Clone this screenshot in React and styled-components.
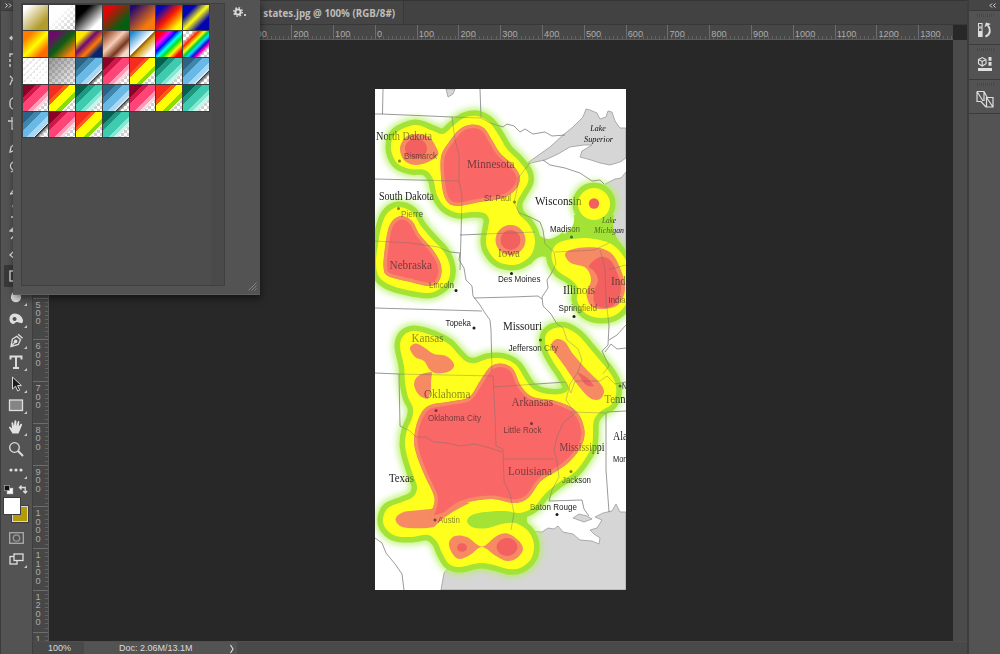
import React from "react";
import styled, { createGlobalStyle, css } from "styled-components";

const GlobalStyle = createGlobalStyle`
  * { box-sizing: border-box; }
  body { margin: 0; background: #282828; overflow: hidden; font-family: "Liberation Sans", Arial, sans-serif; }
`;

const Workspace = styled.div`
  position: relative;
  display: flex;
  width: 1000px;
  height: 654px;
  background: #282828;
  overflow: hidden;
`;

/* ---------- left tool bar ---------- */

const Toolbar = styled.aside`
  display: flex;
  flex-direction: column;
  width: 33px;
  background: #535353;
  border-left: 1px solid #3c3c3c;
  border-right: 1px solid #3e3e3e;
`;

const CollapseStrip = styled.div`
  display: flex;
  align-items: center;
  justify-content: ${(p) => p.$align || "flex-start"};
  height: 11px;
  padding: 0 4px;
  background: #454545;
  border-bottom: 1px solid #3a3a3a;
`;

const ToolList = styled.div`
  display: flex;
  flex-direction: column;
  padding-top: 16.5px;
`;

const ToolSlot = styled.div`
  position: relative;
  display: flex;
  align-items: center;
  justify-content: center;
  height: 21.6px;
  margin: 0 2px 0 3px;
  padding-right: 2px;
  background: ${(p) => (p.$active ? "#383838" : "transparent")};
  ${(p) =>
    p.$more &&
    css`
      &::after {
        content: "";
        position: absolute;
        right: 3px;
        bottom: 2px;
        border-left: 3px solid transparent;
        border-bottom: 3px solid #c8c8c8;
      }
    `}
`;

const Icon = styled.svg`
  display: block;
  flex: none;
  width: ${(p) => p.$w || 16}px;
  height: ${(p) => p.$h || 16}px;
  fill: none;
  stroke: #dedede;
  stroke-width: 1.3;
  overflow: visible;
`;

const ColorControls = styled.div`
  display: flex;
  justify-content: space-between;
  height: 17px;
  padding: 4px 4px 0 3px;
`;

const ColorPair = styled.div`
  position: relative;
  height: 25px;
  margin: 0 0 4px 3px;
`;

const ColorChip = styled.div`
  position: absolute;
  left: ${(p) => (p.$back ? 8 : 0)}px;
  top: ${(p) => (p.$back ? 8 : 0)}px;
  width: 16px;
  height: 16px;
  background: ${(p) => p.$color};
  border: 1px solid ${(p) => (p.$back ? "#d8d8d8" : "#fff")};
  outline: 1px solid #3d3d3d;
`;

/* ---------- document ---------- */

const DocumentArea = styled.main`
  display: flex;
  flex-direction: column;
  width: 934px;
`;

const TabStrip = styled.div`
  display: flex;
  height: 25px;
  background: #424242;
  border-top: 1px solid #353535;
  border-bottom: 1px solid #383838;
`;

const DocumentTab = styled.div`
  display: flex;
  align-items: center;
  justify-content: flex-end;
  width: 371px;
  padding: 2px 8px 0 0;
  border-right: 1px solid #383838;
  background: #454545;
  color: #bdbdbd;
  font: 700 9.75px "Open Sans", sans-serif;
  white-space: nowrap;
`;

const TopRuler = styled.div`
  display: flex;
  width: 920px;
  height: 15px;
  padding-left: 216.5px;
  background: #474747;
  border-bottom: 1px solid #5d5d5d;
  overflow: hidden;
`;

const TopMark = styled.div`
  flex: none;
  width: 41.8px;
  padding: 3px 0 0 1px;
  border-left: 1px solid #6c6c6c;
  background: repeating-linear-gradient(90deg, transparent 0 3.18px, #626262 3.18px 4.18px) 0 100% / 100% 3px no-repeat;
  color: #ababab;
  font-size: 9.2px;
  line-height: 12px;
`;

const DocumentBody = styled.div`
  display: flex;
  height: 601px;
  background: #4b4b4b;
`;

const SideRuler = styled.div`
  display: flex;
  flex-direction: column;
  width: 16px;
  padding-top: 257.5px;
  background: #474747;
  border-right: 1px solid #5b5b5b;
  overflow: hidden;
`;

const SideMark = styled.div`
  flex: none;
  height: 41.8px;
  padding: 2px 0 0 2px;
  border-top: 1px solid #6c6c6c;
  background: repeating-linear-gradient(180deg, transparent 0 3.18px, #626262 3.18px 4.18px) 100% 0 / 3px 100% no-repeat;
  color: #ababab;
  font-size: 9.2px;
  line-height: 8.4px;
`;

const Digit = styled.div`
  width: 6px;
  text-align: center;
`;

const Canvas = styled.div`
  display: flex;
  justify-content: center;
  width: 904px;
  padding: 49px 1px 0 0;
  background: #282828;
`;

const Artwork = styled.svg`
  display: block;
  flex: none;
  width: 251px;
  height: 501px;
  background: #fff;
`;

const StatusBar = styled.footer`
  display: flex;
  height: 13px;
  background: #494949;
  border-top: 1px solid #4f4f4f;
  color: #dadada;
  font-size: 9px;
  line-height: 13px;
`;

const ZoomValue = styled.div`
  width: 51px;
  padding-left: 15px;
`;

const DocInfo = styled.div`
  display: flex;
  justify-content: space-between;
  width: 153px;
  padding: 0 3px 0 35px;
  background: #535353;
`;

/* ---------- right dock ---------- */

const Dock = styled.aside`
  display: flex;
  flex-direction: column;
  width: 33px;
  background: #535353;
  border-left: 2px solid #3d3d3d;
`;

const DockPanel = styled.div`
  display: flex;
  flex-direction: column;
  align-items: center;
  height: 34.3px;
  padding: 3px 0 0 1px;
  border-bottom: 1px solid #3b3b3b;
`;

const Grip = styled.div`
  width: 17px;
  height: 3px;
  margin-bottom: 5px;
  background: repeating-linear-gradient(90deg, #454545 0 1px, #585858 1px 2px);
`;

/* ---------- gradient picker ---------- */

const Picker = styled.section`
  position: absolute;
  left: 13px;
  top: 0;
  display: flex;
  width: 247px;
  height: 295px;
  padding: 3px 0 8px 8px;
  background: #535353;
  border-bottom: 1px solid #606060;
  box-shadow: 1px 3px 7px rgba(0, 0, 0, 0.5);
`;

const SwatchPane = styled.div`
  display: flex;
  width: 204px;
  height: 283px;
  border: 1px solid #404040;
  background: #4d4d4d;
`;

const SwatchGrid = styled.div`
  display: grid;
  grid-template-columns: repeat(7, 25.8px);
  grid-auto-rows: 25.8px;
  align-content: start;
  gap: 1px;
  width: 190px;
  padding: 0.5px;
`;

const Track = styled.div`
  width: 13px;
  background: #4a4a4a;
`;

const Swatch = styled.div`
  outline: 1px solid #3d3d3d;
  background: ${(p) => p.$paint},
    conic-gradient(#cfcfcf 25%, #fff 0 50%, #cfcfcf 0 75%, #fff 0) 0 0 / 6px 6px;
`;

const PickerSide = styled.div`
  display: flex;
  flex: 1;
  flex-direction: column;
  align-items: flex-end;
  justify-content: space-between;
  margin-bottom: -5px;
  padding: 4px 3px 0 0;
`;

const MenuButton = styled.div`
  display: flex;
  align-items: center;
  gap: 1px;
  padding-right: 11px;
`;

const MenuDot = styled.div`
  width: 2px;
  height: 2px;
  margin-top: 5px;
  background: #c8c8c8;
`;

const lg = (stops) => `linear-gradient(135deg, ${stops})`;
const BLUE = lg("#2b6286 0 24%, #3f86ad 24% 38%, #69b9e6 38% 58%, #a9d8f5 58% 71%, #d8ecf8 71% 73%, #2c2c2c 74%, rgba(90,90,90,0) 84%");
const PINK = lg("#8b0228 0 24%, #cf1748 24% 37%, #ff4578 37% 60%, #ff9db8 60% 70%, #ffd5e0 70% 78%, transparent 78%");
const CITRUS = lg("#f32e20 0 30%, #ff5a10 30% 39%, #ffff00 39% 63%, #8bdc00 63% 74%, #f0ffe0 74% 77%, transparent 77%");
const TEAL = lg("#07604f 0 24%, #1d9780 24% 37%, #3ecbb0 37% 59%, #86e8d3 59% 69%, #c8f5ea 69% 77%, transparent 77%");

const swatches = [
  lg("#fff 12%, #b39c2e 75%"),
  lg("#fff 35%, rgba(255,255,255,0) 90%"),
  lg("#000 28%, #fff 78%"),
  lg("#dc0808 22%, #055f10 75%"),
  lg("#26086e 12%, #f87a0c 75%"),
  lg("#0808b8 18%, #ff1800 50%, #ffff00 84%"),
  lg("#0404b0 25%, #ffff10 50%, #0404b0 75%"),
  lg("#ff7c00 20%, #ffff00 52%, #ff6a00 80%"),
  lg("#70086e 18%, #086010 50%, #ff8008 86%"),
  lg("#ffe800 22%, #6c0a70 42%, #ff7a08 62%, #082470 80%"),
  lg("#93441f 8%, #f8cdb8 42%, #78351a 66%, #f5d8c8 84%"),
  lg("#1f86d0 8%, #fff 47%, #8a5c08 50%, #d8a020 58%, #fff 82%"),
  lg("#ff0000 14%, #ff00ff 28%, #0000ff 40%, #00ffff 52%, #00e020 62%, #ffff00 74%, #ff0000 87%"),
  lg("transparent 20%, #ff2000 30%, #ffff00 42%, #00d040 50%, #00e0ff 58%, #1010d0 67%, #ff00c0 75%, transparent 82%"),
  "repeating-linear-gradient(135deg, rgba(255,255,255,.96) 0 3px, rgba(255,255,255,.5) 3px 4.6px)",
  lg("rgba(115,115,115,.75), rgba(170,170,170,.1)"),
  BLUE, PINK, CITRUS, TEAL, BLUE,
  PINK, CITRUS, TEAL, BLUE, PINK, CITRUS, TEAL,
  BLUE, PINK, CITRUS, TEAL,
];

/* ---------- map drawing ---------- */

// Closed Catmull-Rom curve through "x,y x,y ..." points.
const smooth = (text) => {
  const p = text.trim().split(/\s+/).map((s) => s.split(",").map(Number));
  const n = p.length;
  let d = `M${p[0]}`;
  for (let i = 0; i < n; i++) {
    const a = p[(i + n - 1) % n], b = p[i], c = p[(i + 1) % n], e = p[(i + 2) % n];
    const c1 = [b[0] + (c[0] - a[0]) / 6, b[1] + (c[1] - a[1]) / 6];
    const c2 = [c[0] - (e[0] - b[0]) / 6, c[1] - (e[1] - b[1]) / 6];
    d += `C${c1.map((v) => v.toFixed(1))} ${c2.map((v) => v.toFixed(1))} ${c}`;
  }
  return d + "Z";
};

const ring = (x, y, rx, ry = rx) =>
  `M${x - rx},${y}a${rx},${ry} 0 1 0 ${2 * rx},0a${rx},${ry} 0 1 0 ${-2 * rx},0Z`;

const yellowZones = [
  smooth("391,148 396,133 415,125 431,130 443,134 453,126 464,118 477,116 489,122 498,134 507,149 518,160 527,172 528,182 522,193 517,203 519,214 527,222 533,232 535,243 531,255 521,263 510,265 497,261 488,250 486,240 488,228 489,219 484,213 472,212 458,213 445,207 437,195 433,179 425,170 410,169 397,163"),
  smooth("380,232 386,215 398,207 412,212 421,226 432,239 444,252 450,267 448,281 438,290 427,293 407,290 388,284 378,275 376,260 378,245"),
  ring(594, 204, 16),
  smooth("552,252 560,242 583,238 600,240 613,245 624,257 631,275 629,298 617,314 600,318 585,313 577,300 578,288 570,279 559,272 553,263"),
  smooth("400,346 404,335 414,331 428,334 440,339 450,345 459,355 467,362 476,363 487,359 498,358 508,360 517,366 524,377 531,387 541,392.500 555,394.500 565,392.500 568,387 562,375 554,363 548,352 545,342 547,333 555,328 566,328 578,335 588,346 598,358 608,370 615,382 616,394 611,405 601,411 594,420 593,435 592,446 587,456 575,472 558,483 545,494 534,507 520,513 505,511 485,512 472,515 467,521 472,527 485,528.5 498,525 508,523 518,524 529,532 534,545 531,559 520,568 508,569 494,565 480,563 460,567 449,564 442,553 437,542 428,535 412,537 396,536 386,529 383,519 388,508 402,502 413,497 417,487 412,472 407,456 405,443 407,430 412,418 413,408 408,397 405,382 404,366"),
];

const greenLinks = [
  "M528,220Q538,239 549,239Q556,238 563,232L566,246L553,264Q549,256 542,256.500Q536,257 530,265Z",
  "M574,215Q576,230 560,236L575,244L616,248L622,245Q610,232 614,215Z",
  "M467,521Q467,515 485,512L505,511L534,505Q526,512 527,521L529,532L508,523L485,528.500Q468,528 467,521Z",
];

const salmonZones = [
  smooth("400,148 406,137 417,134 429,137 436,147 438,155 428,162 415,165 404,160"),
  ring(510.5, 240, 15),
  smooth("565,255 570,250 583,247.5 600,248 613,255 622,273 625,290 618,305 603,309 591,306 586.5,293 591,280 586,268 571,263"),
  smooth("410,348 416,343.5 425,348 434,354 446,356 454,364 450,371 438,373.5 430,370 424,361 415,357"),
  "M432,372Q414,373 414,385Q417,398 428,399Q432,391 431,382Z",
  smooth("551,345 557,339 565,342 573,354 587,370 599,382 604,391 600,399 590,398 577,384 563,364 555,353"),
  "M440,496Q440,506 431,509Q418,510 405,511.500Q395,515 395.500,520Q397,527 408,528Q425,529 434,527Q447,513 470,503Z",
  smooth("449,543 455,536 467,537 482,546.5 496,536.500 507,533.500 518,540 523,549 517,558 507,561 496,556 482,547 470,555 459,559 452,553"),
];

// Hot areas are red with a salmon rim.
const hotZones = [
  smooth("441,157 449,142 460,129 472,124.500 484,128 492,140 500,153 513,165 520,177 516,189 503,198 480,202 457,206 446,200 441.500,182"),
  smooth("388,230 393,220 402,216 412,221 420,235 433,250 441,265 440,279 431,286 410,282 388,276 383.500,267 385,247"),
  smooth("414,440 418,420 428,406 450,401.500 469,397 480,381 490,367 501,363.500 513,369 521,386 533,397 556,401 576,411 584.500,430 581,447 569,462 557,471 541,481 528,498 514,503 491,499 462,504 444,516 430,518 433,508 434,496 424,474 417,456"),
];

const redZones = [
  ring(416, 148.5, 11, 10),
  ring(510.5, 240, 10),
  ring(594, 203.5, 5.2),
  smooth("589,266 600,257 611,261 619,278 621,290 616,303 606,308 595,304 594,292 598,280 594,271"),
  "M577,372Q588,376 594,386Q586,388 582,380Z",
  ring(462, 547.5, 5, 4.3),
  ring(507, 547, 10.5, 9),
];

const lakes = [
  "M526,164L533,159L550,147L563,135L573,127L583,117L586,109L590,110L597,113L600,119L606,117L608,111L612,112L615,121L620,128L626,128L626,158L620,162L610,165L600,163L591,160L580,157L582,151L592,145L584,145L570,147L558,154L545,160Z",
  "M446,89L455,89L453,94L448,97Z",
  "M598,204L605,184L615,179L621,178L626,172L626,256L617,262L608,255L603,240L601,222Z",
  "M441,590L444,573L450,566L460,556L475,549L487,541L495,530L510,531L527,531L542,532L548,528L554,529L558,526L563,532L573,534L580,540L592,541L599,544L600,538L594,534L590,530L597,528L602,520L595,517L603,513L612,511L616,504L620,512L626,512L626,590Z",
  "M573,518L579,514L587,516L592,519L584,522Z",
];

const borders = [
  "M383,89L382.500,114L375,114",
  "M382,114L452,117L481,118L480,89",
  "M452,117L455,140L459,155L459,181L462,196L461,235L460,270",
  "M375,179L459,181",
  "M481,118L490,123L503,127L507,124L514,126L520,132L525,129L533,134L545,132L552,136L565,135",
  "M530,163L518,178L517,190L514,202L519,213L530,217L540,222",
  "M543,160L550,165L565,168L580,173L592,181L600,180L604,184",
  "M375,241L410,243L438,247L450,252L460,253L459,260L464,268L466,280L472,286L473,296L480,305L485,313L490,320L491,330L492,371",
  "M460,235L535,232",
  "M540,222L543,230L545,244L554,252L556,264L551,274L547,280L548,288L542,297L543,306L551,314L557,324L563,328L567,340L578,349L582,360L578,372L570,384L566,400",
  "M474,298L512,297L538,296L542,299",
  "M555,252L594,250L609,243",
  "M600,250L605,268L606,300L609,325L608,345",
  "M375,308L482,311",
  "M375,373L399,374L493,376",
  "M399,374L400,426L410,431L416,437L426,437L434,442L447,443L460,446L475,444L490,448L502,452",
  "M493,376L495,415L496,446L503,449L504,481L510,494L514,513L511,530",
  "M493,387L566,382L571,393L575,381L600,381L607,376L615,384L626,382",
  "M608,345L602,351L609,366L603,374",
  "M626,348L617,349L611,344L605,352",
  "M566,400L575,413L563,423L557,437L554,450L557,462L559,477L552,490L549,501",
  "M504,459L554,459",
  "M549,501L582,500L584,509L589,516",
  "M570,412L606,413L606,470L609,512",
  "M606,412L626,411",
  "M609,269L615,268L626,265",
  "M375,538L382,543L386,553L395,564L402,574L404,590",
  "M626,325L617,335L609,340",
];

const stateLabels = [
  ["North Dakota", 376, 140, 56], ["Minnesota", 467, 168, 47.5], ["South Dakota", 379, 199.5, 55],
  ["Wisconsin", 535, 204.5, 46.5], ["Iowa", 498, 257, 22], ["Nebraska", 389.5, 269, 42.5],
  ["Illinois", 563, 294, 32], ["Missouri", 503, 329.5, 39], ["Kansas", 411.5, 342, 32],
  ["Oklahoma", 424, 398, 46.5], ["Arkansas", 511.5, 406, 41.5], ["Mississippi", 559.5, 451, 45],
  ["Texas", 389, 482, 25], ["Louisiana", 508, 475, 44], ["Ind", 611, 285, 15], ["Tenn", 604.5, 403, 21], ["Ala", 613, 440, 14.5],
];

const cityLabels = [
  ["Bismarck", 404, 158.5, 33], ["St. Paul", 484, 200.5, 27], ["Pierre", 401, 216.5, 22],
  ["Madison", 550, 231.5, 30], ["Lincoln", 429, 288, 25], ["Des Moines", 498, 282, 42.5],
  ["Springfield", 558.5, 311, 38.5], ["India", 608.5, 303, 17], ["Topeka", 445.5, 326, 25.5],
  ["Jefferson City", 508.5, 350.5, 49.5], ["Oklahoma City", 428, 421, 53], ["Little Rock", 503.5, 432.5, 38],
  ["Jackson", 562, 482.5, 29], ["Baton Rouge", 530, 510, 47], ["Austin", 438, 523, 22], ["N", 622, 388.5, 5], ["Mon", 613, 461.5, 14.5],
];

const lakeLabels = [["Lake", 598, 131, 15.5], ["Superior", 598.5, 141.5, 29], ["Lake", 609, 223, 14], ["Michigan", 609, 233, 30]];

const cityDots = [
  [399.5, 161], [514.5, 202], [398.5, 208.5], [571.5, 237], [456, 290.5], [511.5, 273.5], [574, 316.5],
  [474, 328], [540.5, 340], [436, 410.5], [531.5, 423.5], [571, 471.5], [557, 514.5], [435, 520], [620, 386],
];

const StateText = styled.text`
  font: 11.6px "Liberation Serif", serif;
  fill: #1c1c1c;
`;
const CityText = styled.text`
  font: 8.2px "Liberation Sans", sans-serif;
  fill: #1c1c1c;
`;
const LakeText = styled.text`
  font: italic 9px "Liberation Serif", serif;
  fill: #111;
  text-anchor: middle;
`;

const Paths = ({ list, ...rest }) => (
  <g {...rest}>{list.map((d, i) => <path key={i} d={d} />)}</g>
);

function HeatMap() {
  return (
    <Artwork viewBox="375 89 251 501">
      <defs>
        <filter id="glow" x="-20%" y="-20%" width="140%" height="140%">
          <feGaussianBlur stdDeviation="3.4" />
        </filter>
        <mask id="ink" maskUnits="userSpaceOnUse" x="375" y="89" width="251" height="501">
          <rect x="375" y="89" width="251" height="501" fill="#fff" />
          <Paths list={yellowZones} fill="#888" stroke="#999" strokeWidth="11" />
          <Paths list={greenLinks} fill="#999" />
          <Paths list={yellowZones} fill="#888" />
          <Paths list={[...salmonZones, ...hotZones, ...redZones]} fill="#9c9c9c" />
        </mask>
        {hotZones.map((d, i) => (
          <clipPath key={i} id={`hot${i}`}><path d={d} /></clipPath>
        ))}
      </defs>
      <Paths list={lakes} fill="#d6d6d6" stroke="#909090" strokeWidth="0.7" />
      <Paths list={yellowZones} fill="#b4f060" stroke="#b4f060" strokeWidth="16" filter="url(#glow)" opacity="0.8" />
      <Paths list={yellowZones} fill="#a2e335" stroke="#a2e335" strokeWidth="11" />
      <Paths list={greenLinks} fill="#a2e335" />
      <Paths list={yellowZones} fill="#ffff1e" />
      <Paths list={salmonZones} fill="#f68a62" />
      {hotZones.map((d, i) => (
        <path key={i} d={d} fill="#f96867" stroke="#f68a62" strokeWidth="7" clipPath={`url(#hot${i})`} />
      ))}
      <Paths list={redZones} fill="#f26060" />
      <g mask="url(#ink)">
        <Paths list={borders} fill="none" stroke="#6e6e6e" strokeWidth="0.7" strokeLinejoin="round" />
        {cityDots.map(([x, y]) => <circle key={`${x}`} cx={x} cy={y} r="1.5" fill="#1c1c1c" />)}
        {stateLabels.map(([t, x, y, w]) => <StateText key={t} x={x} y={y} textLength={w} lengthAdjust="spacingAndGlyphs">{t}</StateText>)}
        {cityLabels.map(([t, x, y, w]) => <CityText key={t} x={x} y={y} textLength={w} lengthAdjust="spacingAndGlyphs">{t}</CityText>)}
        {lakeLabels.map(([t, x, y, w]) => <LakeText key={y} x={x} y={y} textLength={w} lengthAdjust="spacingAndGlyphs">{t}</LakeText>)}
      </g>
    </Artwork>
  );
}

/* ---------- tools ---------- */

const tools = [
  { art: <path d="M1.500 8h13M8 1.500v13M4 6L2 8l2 2M12 6l2 2-2 2" /> },
  { art: <rect x="2" y="2" width="12" height="12" strokeDasharray="3 2" /> },
  { art: <path d="M2 3l4 4 7-5-3 9-6-4-2 5" /> },
  { art: <rect x="2" y="3" width="12" height="11" rx="4" /> },
  { art: <path d="M4 0v12h12M0 4h12v12" /> },
  { art: <path d="M2 14l1-5 8-7 3 3-8 8z" /> },
  { art: <path d="M6 2a4 4 0 1 0 1 8l6 4M3 12l4-2" /> },
  { art: <path d="M2 13c2 0 1-3 4-4l7-7-6 8c-1 3-3 3-5 3z" /> },
  { art: <path d="M3 14h10M5 11h6M7 10L5 3h6l-2 7" /> },
  { art: <path d="M2 6l4-4v5zM3 14l9-10" fill="#dedede" /> },
  { art: <path d="M2 9l6-6 6 4-6 7z" /> },
  { active: true, art: <rect x="2" y="3" width="12" height="10" /> },
  { more: true, art: <path d="M8 0c2 3 4.500 4 4.500 8a4.500 4.500 0 0 1-9 0C3.500 5 6 3 8 0z" fill="#dedede" /> },
  { more: true, art: <path d="M1.500 7C2 3 6 1.500 9.500 3c3 1 5 3.500 5.500 6.500.2 2-1 3-2.500 2.500L9 11c-2 0-2 2-4 2-2.500-.5-4-3-3.500-6zM6.500 6a2 2 0 1 0 .1 0z" fill="#dedede" fillRule="evenodd" stroke="none" /> },
  { more: true, art: <g transform="rotate(42 8 8)"><path d="M8 15.500L4 9l1.500-5h5L12 9zM8 15V9.500M5 1.500h6" /><circle cx="8" cy="8.500" r="1.200" fill="#dedede" /></g> },
  { more: true, art: <path d="M2.500 5.500V2.500h11v3M8 2.500v11.500M5 14h6" strokeWidth="1.900" /> },
  { more: true, art: <path d="M4.500 1v12l3-2.800L9.700 15l2-1-2.200-4.400H13.500z" fill="#1c1c1c" stroke="#d8d8d8" strokeWidth="1" /> },
  { more: true, art: <rect x="1.500" y="3" width="13" height="10.500" fill="#858585" /> },
  { more: true, art: <path d="M4.500 14.500L1 8.800c-.5-1 1-1.400 1.800-.5L4 9.500 3.500 4c0-1 1.400-1.200 1.700-.1l.7 3.300L6.500 2c.1-1 1.700-1 1.800 0l.2 5 1.200-4.300c.3-1 1.700-.7 1.600.4L10.800 7.600l1.700-2.500c.7-.8 1.900-.1 1.500.9l-2 5-1.500 3.500z" fill="#e2e2e2" stroke="none" /> },
  { art: <><circle cx="6.500" cy="6.500" r="4.800" /><path d="M10 10l5 5" strokeWidth="2" /></> },
  { more: true, art: <g fill="#dedede" stroke="none"><circle cx="3" cy="8" r="1.600" /><circle cx="8" cy="8" r="1.600" /><circle cx="13" cy="8" r="1.600" /></g> },
];

const dockIcons = [
  <g key="history"><rect x="1.500" y="1.500" width="3.600" height="3.500" strokeWidth="1" /><rect x="1.500" y="6" width="3.600" height="3.500" strokeWidth="1" /><rect x="1.500" y="10.500" width="3.600" height="4" fill="#dedede" strokeWidth="1" /><path d="M8.500 14.500c5-2 5.500-7 2.500-11" strokeWidth="2" /><path d="M7.500 5L9 .5l5 1.500z" fill="#dedede" stroke="none" /></g>,
  <g key="libraries"><path d="M1.500 3.500L5.200 1.500 9 3.500v4.200L5.200 10 1.500 7.700zM1.500 3.500l3.700 2 3.800-2M5.200 5.500V10" strokeWidth="1.100" /><path d="M13 1v9" strokeWidth="3" strokeDasharray="3.800 1.200" /><rect x="1" y="12" width="14" height="3" fill="#dedede" stroke="none" /></g>,
  <g key="layers" strokeWidth="1.200"><path d="M0 .5h7l3 5.500M0 .5v10h4l5 5.500M0 .5l6 9.500M7 .5v9.500" /><path d="M9.500 6.500H16v9.500H9.500zM9.500 6.500L16 16" /></g>,
];

export default function App() {
  const across = [300, 200, 100, 0, 100, 200, 300, 400, 500, 600, 700, 800, 900, 1000, 1100, 1200, 1300];
  const down = ["500", "600", "700", "800", "900", "1000", "1100", "1200", "1"];
  return (
    <>
      <GlobalStyle />
      <Workspace>
        <Toolbar>
          <CollapseStrip>
            <Icon $w={7} $h={5} viewBox="0 0 7 5"><path d="M.5.5l2 2-2 2M4 .5l2 2-2 2" strokeWidth="1" /></Icon>
          </CollapseStrip>
          <ToolList>
            {tools.map((t, i) => (
              <ToolSlot key={i} $active={t.active} $more={t.more}>
                <Icon viewBox="0 0 16 16">{t.art}</Icon>
              </ToolSlot>
            ))}
          </ToolList>
          <ColorControls>
            <Icon $w={9} $h={9} viewBox="0 0 9 9"><rect x="3.500" y="3.500" width="5" height="5" fill="#fff" /><rect x=".5" y=".5" width="5" height="5" fill="#111" stroke="#aaa" strokeWidth=".7" /></Icon>
            <Icon $w={9} $h={9} viewBox="0 0 9 9"><path d="M2.500.5L.5 2.500l2 2M.8 2.500h5.400v5M4.200 6l2 2 2-2" /></Icon>
          </ColorControls>
          <ColorPair>
            <ColorChip $back $color="#b39b0c" />
            <ColorChip $color="#fff" />
          </ColorPair>
          <ToolSlot>
            <Icon $w={15} $h={12} viewBox="0 0 15 12"><rect x=".7" y=".7" width="13.600" height="10.600" stroke="#aaa" /><circle cx="7.500" cy="6" r="3.200" stroke="#999" /></Icon>
          </ToolSlot>
          <ToolSlot $more>
            <Icon $w={15} $h={12} viewBox="0 0 15 12"><rect x="1" y="3.500" width="7" height="7.500" /><rect x="5" y="1" width="9" height="6.500" fill="#535353" /></Icon>
          </ToolSlot>
        </Toolbar>

        <DocumentArea>
          <TabStrip><DocumentTab>states.jpg @ 100% (RGB/8#)</DocumentTab></TabStrip>
          <TopRuler>{across.map((n, i) => <TopMark key={i}>{n}</TopMark>)}</TopRuler>
          <DocumentBody>
            <SideRuler>
              {down.map((n) => (
                <SideMark key={n}>{n.split("").map((c, i) => <Digit key={i}>{c}</Digit>)}</SideMark>
              ))}
            </SideRuler>
            <Canvas><HeatMap /></Canvas>
          </DocumentBody>
          <StatusBar>
            <ZoomValue>100%</ZoomValue>
            <DocInfo>
              <span>Doc: 2.06M/13.1M</span>
              <Icon $w={4} $h={12} viewBox="0 0 4 12"><path d="M.5 3l2.500 4-2.500 4" strokeWidth="1.100" /></Icon>
            </DocInfo>
          </StatusBar>
        </DocumentArea>

        <Dock>
          <CollapseStrip $align="flex-end">
            <Icon $w={7} $h={5} viewBox="0 0 7 5"><path d="M3 .5l-2 2 2 2M6.500.5l-2 2 2 2" strokeWidth="1" /></Icon>
          </CollapseStrip>
          {dockIcons.map((art, i) => (
            <DockPanel key={i}>
              <Grip />
              <Icon viewBox="0 0 16 16">{art}</Icon>
            </DockPanel>
          ))}
        </Dock>

        <Picker>
          <SwatchPane>
            <SwatchGrid>{swatches.map((s, i) => <Swatch key={i} $paint={s} />)}</SwatchGrid>
            <Track />
          </SwatchPane>
          <PickerSide>
            <MenuButton>
              <Icon $w={10} $h={10} viewBox="0 0 10 10"><circle cx="5" cy="5" r="2.600" strokeWidth="1.900" /><circle cx="5" cy="5" r="4.200" strokeWidth="1.500" strokeDasharray="1.600 1.700" /></Icon>
              <MenuDot />
            </MenuButton>
            <Icon $w={9} $h={9} viewBox="0 0 9 9"><path d="M.5 8.500l8-8M3.500 8.500l5-5M6.500 8.500l2-2" strokeWidth=".8" stroke="#8c8c8c" /></Icon>
          </PickerSide>
        </Picker>
      </Workspace>
    </>
  );
}
